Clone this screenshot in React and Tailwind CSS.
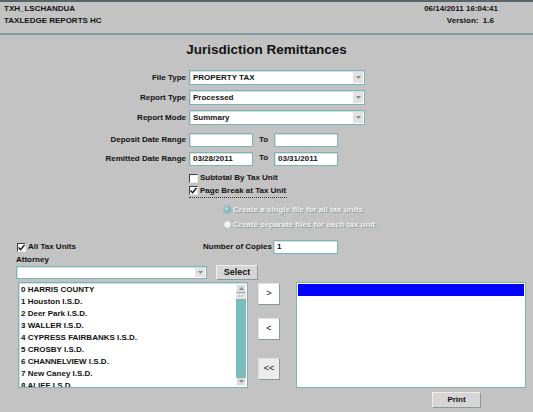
import React from "react";

const FONT = { fontFamily: '"Liberation Sans", Arial, sans-serif' };

function DropBox({ value, className = "" }) {
  return (
    <div className={`flex h-full bg-white border border-[#7fb3b3] shadow-[inset_1px_1px_0_#d0e4e4] ${className}`}>
      <div className="flex-1 flex items-center pl-[3px] truncate">{value}</div>
      <div className="w-[10px] my-[1px] mr-[1px] bg-[#e2e2e2] flex items-center justify-center">
        <svg width="5" height="3" viewBox="0 0 5 3">
          <path d="M0 0 L5 0 L2.5 3 Z" fill="#8a8a8a" />
        </svg>
      </div>
    </div>
  );
}

function TextBox({ value = "", className = "" }) {
  return (
    <div className={`bg-white border border-[#7fb3b3] shadow-[inset_1px_1px_0_#d0e4e4] flex items-center pl-[3px] ${className}`}>
      {value}
    </div>
  );
}

function Check({ checked }) {
  return (
    <div className="w-[9px] h-[9px] shrink-0 bg-white border-t border-l border-[#404040] border-r border-b border-r-[#e8e8e8] border-b-[#e8e8e8] flex items-center justify-center">
      {checked && (
        <svg width="8" height="7" viewBox="0 0 8 7">
          <path d="M0.5 3.5 L3 6 L7.5 0.5" stroke="#111" strokeWidth="1.6" fill="none" />
        </svg>
      )}
    </div>
  );
}

function Radio({ on }) {
  return (
    <svg width="9" height="9" viewBox="0 0 9 9" className="shrink-0">
      <circle cx="4.5" cy="4.5" r="4" fill={on ? "#80c0c0" : "#f2f2f2"} stroke="#a8b8b8" strokeWidth="1" />
      {on && <circle cx="3.5" cy="3.5" r="1.3" fill="#c8e8e8" />}
    </svg>
  );
}

function SmallButton({ label, gray }) {
  return (
    <div
      className={`w-[22px] h-[22px] flex items-center justify-center border border-[#e0e0e0] border-r-[#8a9a9a] border-b-[#8a9a9a] ${
        gray ? "bg-[#ececec]" : "bg-white"
      }`}
    >
      {label}
    </div>
  );
}

const units = [
  "0 HARRIS COUNTY",
  "1 Houston I.S.D.",
  "2 Deer Park I.S.D.",
  "3 WALLER I.S.D.",
  "4 CYPRESS FAIRBANKS I.S.D.",
  "5 CROSBY I.S.D.",
  "6 CHANNELVIEW I.S.D.",
  "7 New Caney I.S.D.",
  "8 ALIEF I.S.D.",
];

export default function App() {
  return (
    <div
      style={FONT}
      className="w-[533px] h-[412px] overflow-hidden bg-[#c3c3c3] text-[8px] font-bold text-[#111] border-t-2 border-[#566666]"
    >
      {/* Header */}
      <div className="flex justify-between h-[33px] pl-[4px] pr-[35px] pt-[1px] border-b-2 border-[#809c9c] leading-[12px]">
        <div>
          <div>TXH_LSCHANDUA</div>
          <div>TAXLEDGE REPORTS HC</div>
        </div>
        <div className="text-right">
          <div>06/14/2011 16:04:41</div>
          <div className="pr-[4px]">Version:&nbsp; 1.6</div>
        </div>
      </div>

      {/* Title */}
      <div className="h-[30px] flex items-center justify-center text-[13.5px] font-bold">
        Jurisdiction Remittances
      </div>

      {/* Form */}
      <div className="grid grid-cols-[186px_176px] gap-x-[3px] mt-[5px]">
        <div className="h-[15px] flex items-center justify-end">File Type</div>
        <DropBox value="PROPERTY TAX" />
        <div className="h-[15px] mt-[5px] flex items-center justify-end">Report Type</div>
        <div className="h-[15px] mt-[5px]">
          <DropBox value="Processed" />
        </div>
        <div className="h-[15px] mt-[5px] flex items-center justify-end">Report Mode</div>
        <div className="h-[15px] mt-[5px]">
          <DropBox value="Summary" />
        </div>

        <div className="h-[14px] mt-[8px] flex items-center justify-end">Deposit Date Range</div>
        <div className="h-[14px] mt-[8px] flex items-center">
          <TextBox className="w-[64px] h-full" />
          <span className="ml-[6px] w-[15px]">To</span>
          <TextBox className="w-[64px] h-full" />
        </div>
        <div className="h-[14px] mt-[5px] flex items-center justify-end">Remitted Date Range</div>
        <div className="h-[14px] mt-[5px] flex items-center">
          <TextBox className="w-[64px] h-full" value="03/28/2011" />
          <span className="ml-[6px] w-[15px] -mt-[3px]">To</span>
          <TextBox className="w-[64px] h-full" value="03/31/2011" />
        </div>
      </div>

      <div className="ml-[189px] mt-[6px] whitespace-nowrap">
        <div className="h-[12px] flex items-center gap-[2px]">
          <Check />
          <span>Subtotal By Tax Unit</span>
        </div>
        <div className="h-[14px] w-fit pr-[1px] flex items-center gap-[2px] border-b border-dotted border-[#333]">
          <Check checked />
          <span>Page Break at Tax Unit</span>
        </div>
        <div className="ml-[34px] mt-[4px] text-[#eeeeee] [text-shadow:1px_1px_0_#909c9c]">
          <div className="h-[15px] flex items-center gap-[1px]">
            <Radio on />
            <span>Create a single file for all tax units</span>
          </div>
          <div className="h-[15px] flex items-center gap-[1px]">
            <Radio />
            <span>Create separate files for each tax unit</span>
          </div>
        </div>
      </div>

      {/* All tax units / copies */}
      <div className="flex items-center h-[14px] mt-[8px] pl-[17px] whitespace-nowrap">
        <div className="flex items-center gap-[2px] w-[180px]">
          <Check checked />
          <span>All Tax Units</span>
        </div>
        <div className="w-[76px] text-right pr-[1px]">Number of Copies</div>
        <TextBox className="w-[65px] h-[14px]" value="1" />
      </div>

      <div className="pl-[16px] h-[11px] flex items-center">Attorney</div>

      <div className="flex items-center pl-[16px] h-[15px]">
        <div className="w-[191px] h-[13px]">
          <DropBox value="" />
        </div>
        <div className="ml-[9px] w-[42px] h-[15px] flex items-center justify-center bg-[#d6d6d6] border border-[#eeeeee] border-r-[#8a9a9a] border-b-[#8a9a9a] text-[9px]">
          Select
        </div>
      </div>

      {/* Lists */}
      <div className="flex mt-[2px] pl-[18px] h-[106px]">
        <div className="w-[230px] h-full flex bg-white border border-[#7fb3b3] shadow-[inset_1px_1px_0_#d0e4e4]">
          <div className="flex-1 pt-[1px] pl-[2px] leading-[12px] overflow-hidden">
            {units.map((u) => (
              <div key={u} className="whitespace-nowrap">
                {u}
              </div>
            ))}
          </div>
          <div className="w-[10px] my-[1px] mr-[1px] flex flex-col bg-[#7bbcbc]">
            <div className="h-[9px] bg-[#dcdcdc] border border-[#f4f4f4] border-b-[#9aaaaa] flex items-center justify-center">
              <svg width="5" height="3" viewBox="0 0 5 3">
                <path d="M0 3 L5 3 L2.5 0 Z" fill="#8a8a8a" />
              </svg>
            </div>
            <div className="h-[7px] bg-[#e4e4e4] border-b border-[#9aaaaa] flex items-center justify-center">
              <svg width="6" height="4" viewBox="0 0 6 4">
                <path d="M0 3 L2 1 M3 3 L5 1" stroke="#9a9a9a" strokeWidth="0.8" />
              </svg>
            </div>
            <div className="flex-1" />
            <div className="h-[9px] bg-[#dcdcdc] border border-[#f4f4f4] border-t-[#9aaaaa] flex items-center justify-center">
              <svg width="5" height="3" viewBox="0 0 5 3">
                <path d="M0 0 L5 0 L2.5 3 Z" fill="#8a8a8a" />
              </svg>
            </div>
          </div>
        </div>

        <div className="ml-[10px] w-[22px] flex flex-col pt-[1px] text-[9px] font-normal">
          <SmallButton label=">" />
          <div className="h-[13px]" />
          <SmallButton label="<" />
          <div className="h-[18px]" />
          <SmallButton label="<<" gray />
        </div>

        <div className="ml-[16px] w-[230px] h-full bg-white border border-[#7fb3b3] p-[1px]">
          <div className="h-[12px] bg-[#0000ff]" />
        </div>
      </div>

      <div className="ml-[432px] mt-[4px] w-[49px] h-[16px] flex items-center justify-center bg-[#d6d6d6] border border-[#eeeeee] border-r-[#8a9a9a] border-b-[#8a9a9a]">
        Print
      </div>
    </div>
  );
}
